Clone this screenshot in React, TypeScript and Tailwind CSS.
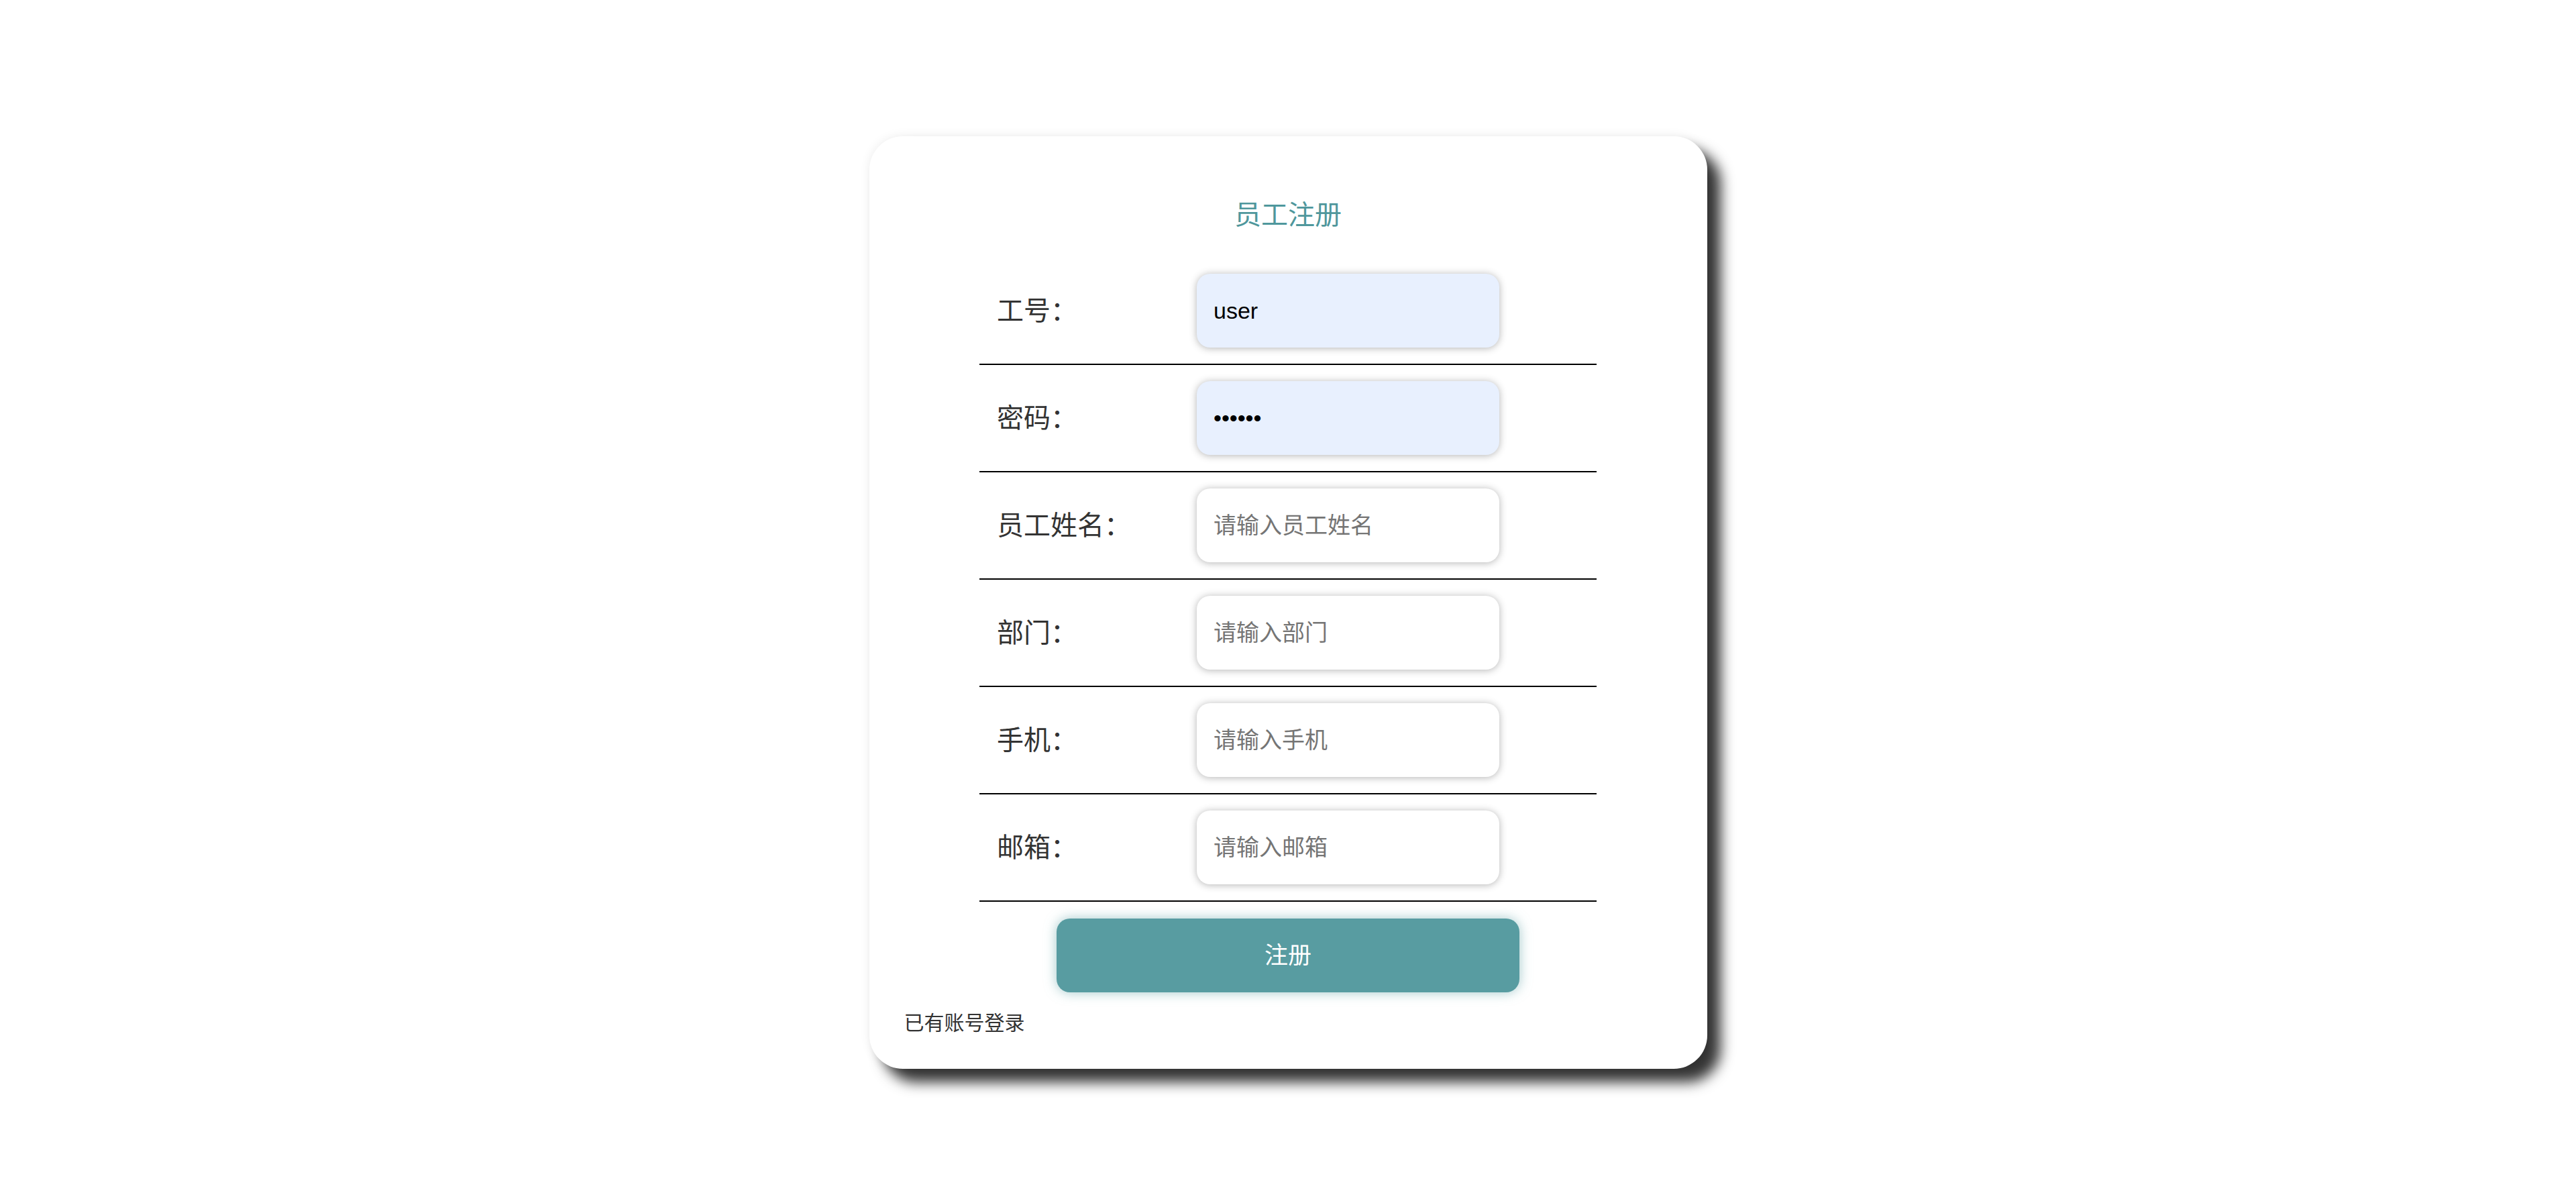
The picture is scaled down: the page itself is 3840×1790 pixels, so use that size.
import React from 'react';

const fields = [
  { label: '工号', type: 'text', value: 'user', placeholder: '请输入工号' },
  { label: '密码', type: 'password', value: '123456', placeholder: '请输入密码' },
  { label: '员工姓名', type: 'text', value: '', placeholder: '请输入员工姓名' },
  { label: '部门', type: 'text', value: '', placeholder: '请输入部门' },
  { label: '手机', type: 'text', value: '', placeholder: '请输入手机' },
  { label: '邮箱', type: 'text', value: '', placeholder: '请输入邮箱' },
];

export default function App() {
  return (
    <div className="min-h-screen bg-white pt-[203px] font-['Liberation_Sans','Noto_Sans_CJK_SC',sans-serif]">
      <div className="mx-auto flex h-[1390px] w-[1249px] flex-col rounded-[50px] bg-white px-[52px] pt-[87px] shadow-[20px_20px_20px_rgba(0,0,0,0.8),0_0_15px_rgba(0,0,0,0.08)]">
        <h1 className="text-center text-[40px] leading-[60px] font-normal text-[#4f979c]">员工注册</h1>

        <div className="mx-auto mt-[34px] w-[920px]">
          {fields.map((f) => (
            <div key={f.label} className="flex h-[160px] items-center border-b-2 border-black">
              <label className="w-[324px] pl-[26px] text-[40px] leading-[60px] text-[#333]">{f.label}：</label>
              <input
                type={f.type}
                defaultValue={f.value}
                placeholder={f.placeholder}
                className={
                  'h-[110px] w-[451px] rounded-[20px] pl-[25px] text-[34px] text-black outline-none shadow-[0_1px_12px_rgba(0,0,0,0.3)] placeholder:text-[#757575] ' +
                  (f.value ? 'bg-[#e8f0fe]' : 'bg-white')
                }
              />
            </div>
          ))}
        </div>

        <button className="mx-auto mt-[25px] h-[110px] w-[690px] rounded-[20px] bg-[#589ca1] text-[35px] text-white shadow-[0_0_18px_rgba(88,156,161,0.55)]">
          注册
        </button>

        <div className="mt-[23px] text-[30px] leading-[45px] text-[#333]">已有账号登录</div>
      </div>
    </div>
  );
}
